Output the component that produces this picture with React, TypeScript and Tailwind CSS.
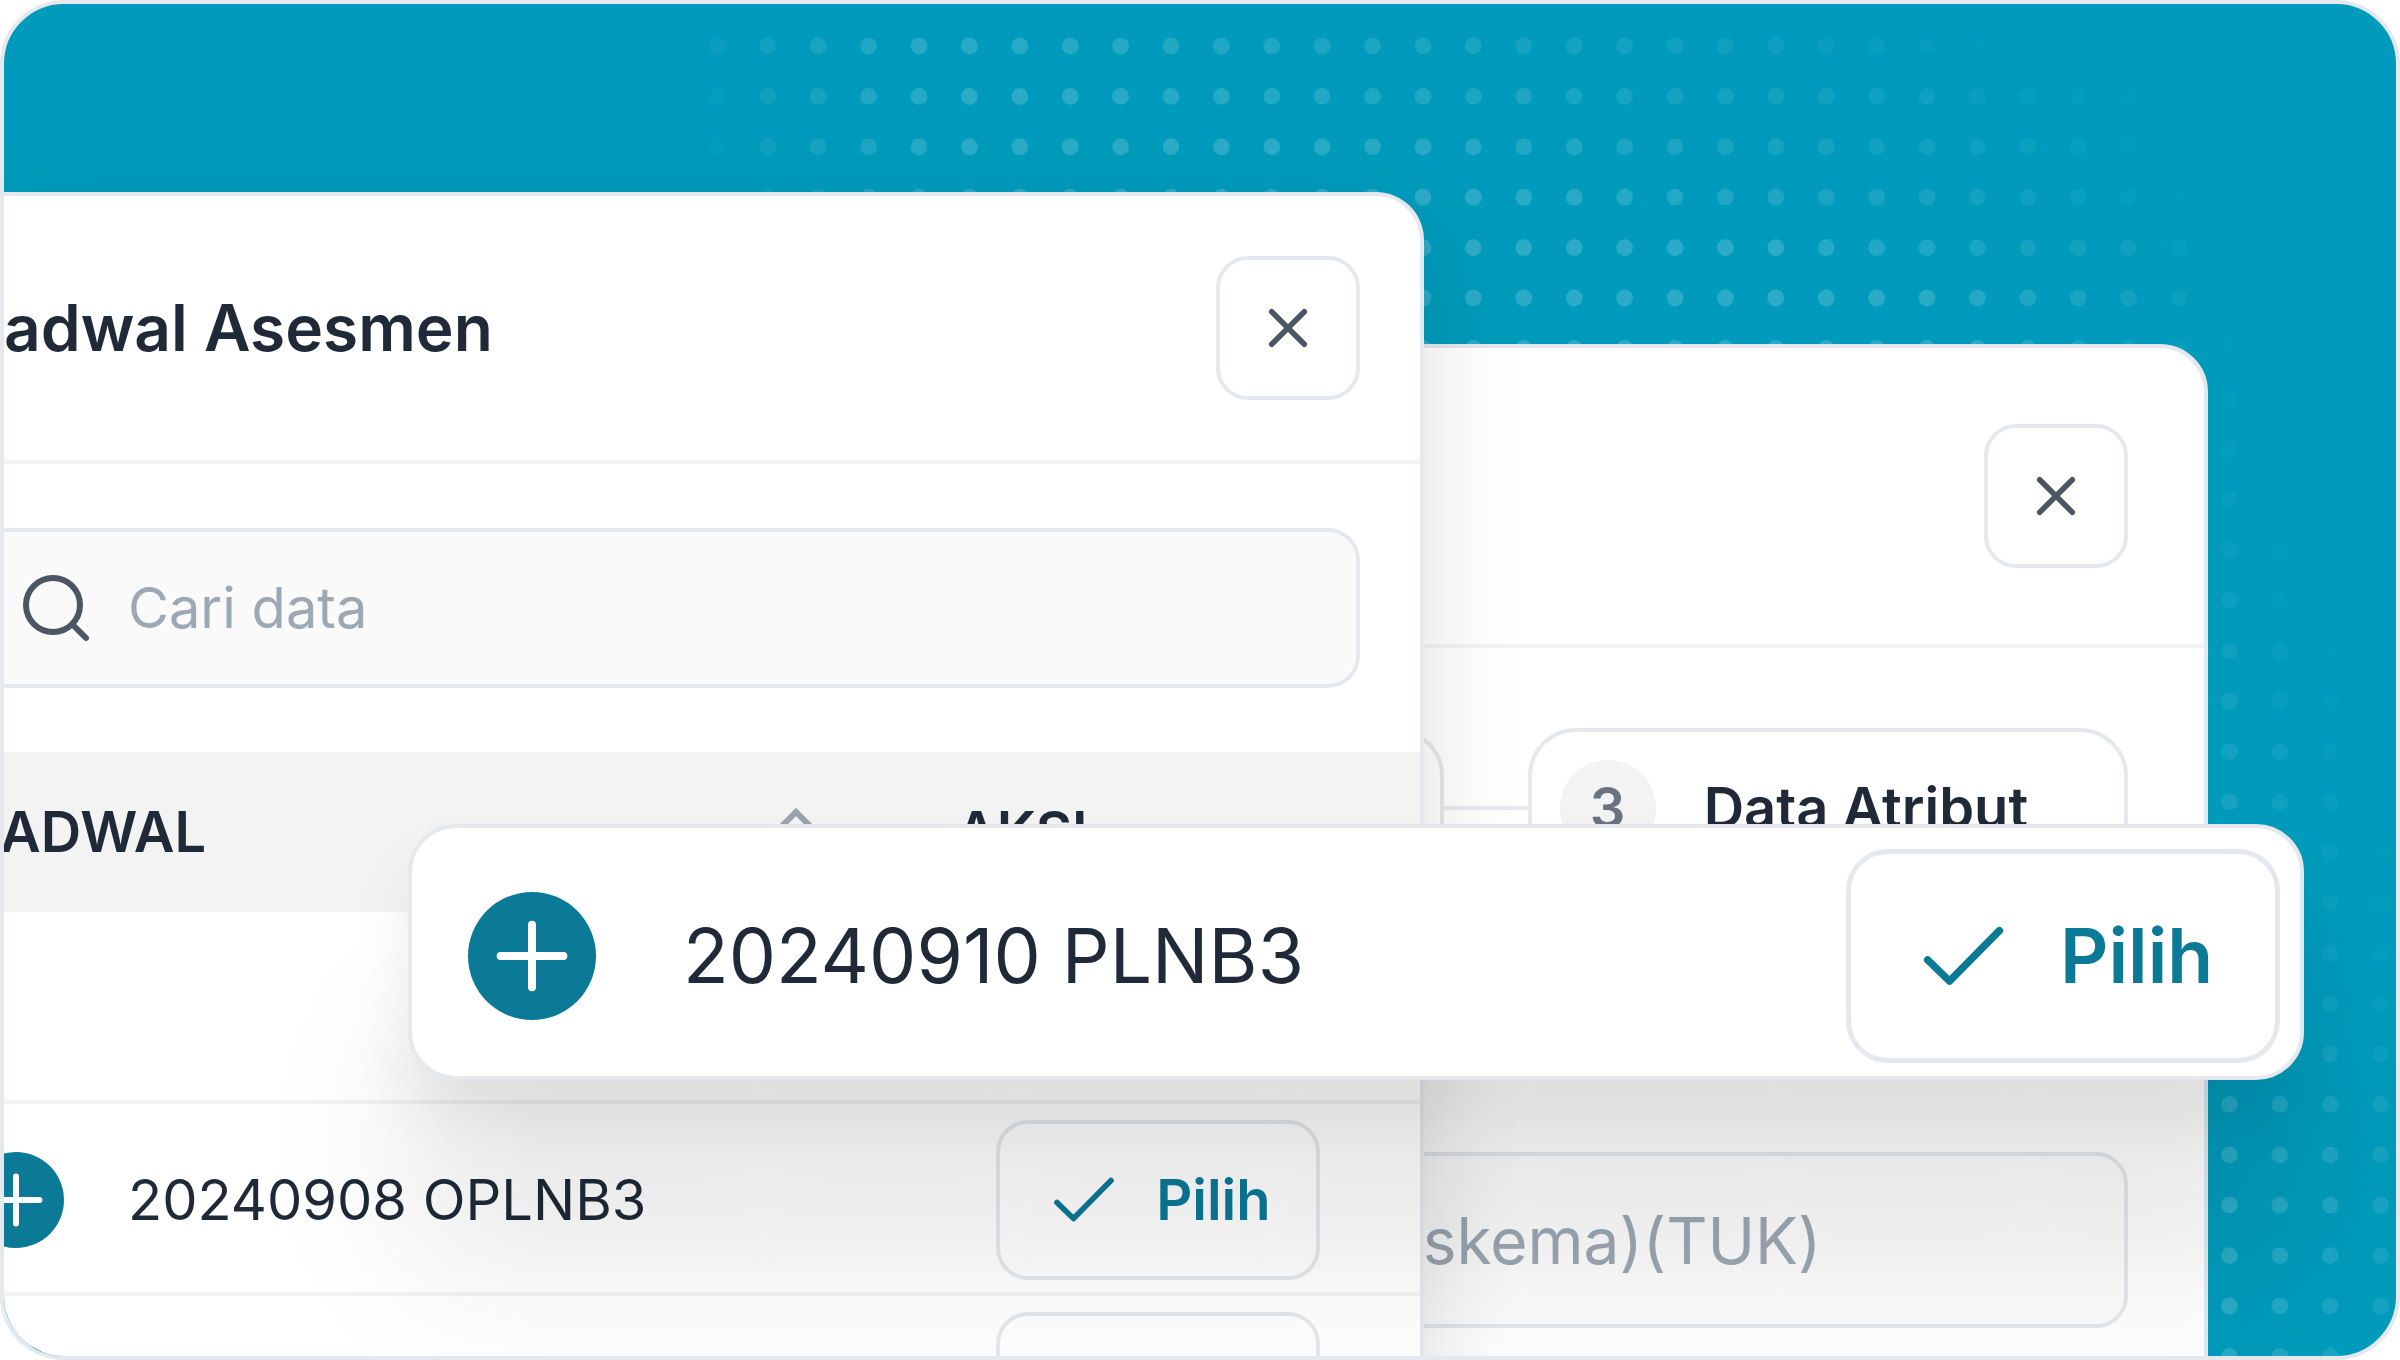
import clsx from 'clsx';

// Fade of the dot pattern: for a given y, dots are solid up to `full` and gone at `none`
const FADE = [
  { y: 46, full: 860, none: 1990 },
  { y: 96, full: 1000, none: 2150 },
  { y: 147, full: 1250, none: 2170 },
  { y: 197, full: 1500, none: 2190 },
  { y: 247, full: 1750, none: 2220 },
  { y: 298, full: 1900, none: 2230 },
  { y: 350, full: 1980, none: 2250 },
  { y: 500, full: 2000, none: 2290 },
  { y: 700, full: 2050, none: 2360 },
  { y: 1000, full: 2150, none: 2430 },
  { y: 1200, full: 2230, none: 2600 },
  { y: 1400, full: 2200, none: 2560 },
];

const STEP = 50.4;

function dotOpacity(x: number, y: number) {
  const last = FADE.length - 1;
  let i = FADE.findIndex((stop) => stop.y >= y);
  if (i === -1) i = last;
  const b = FADE[i];
  const a = FADE[Math.max(i - 1, 0)];
  const t = a === b ? 0 : Math.min((y - a.y) / (b.y - a.y), 1);
  const full = a.full + (b.full - a.full) * t;
  const none = a.none + (b.none - a.none) * t;
  const right = Math.pow(Math.max(0, (none - x) / (none - full)), y < 300 ? 0.75 : 1.1);
  const left = (x - 650 - y * 0.2) / 280;
  return 0.17 * Math.max(0, Math.min(1, left, right));
}

function DotPattern() {
  const dots = [];
  for (let row = 0; row < 27; row++) {
    for (let col = 0; col < 35; col++) {
      const x = 667 + col * STEP;
      const y = 46 + row * STEP;
      const opacity = dotOpacity(x, y);
      if (opacity > 0.005) {
        dots.push(<circle key={`${row}-${col}`} cx={x - 4} cy={y - 4} r="8.4" fill="white" opacity={opacity} />);
      }
    }
  }
  return (
    <svg className="absolute inset-0 w-full h-full" viewBox="0 0 2392 1352" preserveAspectRatio="xMaxYMin slice" aria-hidden="true">
      {dots}
    </svg>
  );
}

function CloseButton() {
  return (
    <button type="button" aria-label="Tutup" className="size-36 shrink-0 flex items-center justify-center rounded-[32px] border-4 border-[#e5e8ec] bg-white text-[#4b5563]">
      <svg className="size-10" viewBox="0 0 40 40" fill="none" stroke="currentColor" strokeWidth="5.6" strokeLinecap="round">
        <path d="M3.7 3.7 36.3 36.3M36.3 3.7 3.7 36.3" />
      </svg>
    </button>
  );
}

function AddButton({ large = false }: { large?: boolean }) {
  return (
    <button
      type="button"
      aria-label="Tambah"
      className={clsx('shrink-0 flex items-center justify-center rounded-full bg-[#0b7a97] text-white', large ? 'size-32' : 'size-24')}
    >
      <svg className="size-full" viewBox="0 0 96 96" fill="none" stroke="currentColor" strokeWidth="6" strokeLinecap="round">
        <path d="M48 24.5v47M24.5 48h47" />
      </svg>
    </button>
  );
}

function SelectButton({ label, large = false }: { label?: string; large?: boolean }) {
  return (
    <button
      type="button"
      aria-label="Pilih"
      className={clsx(
        'shrink-0 flex items-center border-[#e5e8ec] text-[#0b7a97] font-semibold',
        large
          ? 'w-[434px] h-[214px] pl-[70px] gap-[54px] rounded-[42px] border-[5px] text-[75px]'
          : 'w-[324px] h-40 pl-[52px] gap-10 rounded-[32px] border-4 text-[56px]'
      )}
    >
      <svg className={large ? 'size-[85px]' : 'size-16'} viewBox="0 0 64 64" fill="none" stroke="currentColor" strokeWidth="5.6" strokeLinecap="round" strokeLinejoin="round">
        <path d="M5 34.5 21.5 50.5 59 12.5" />
      </svg>
      {label}
    </button>
  );
}

function DetailPanel() {
  return (
    <section className="absolute left-[54%] right-[188px] top-[340px] -bottom-16 rounded-[48px] border-4 border-[#e5e8ec] bg-white">
      <header className="h-[300px] flex items-center justify-end pr-[76px] border-b-4 border-[#f3f3f3]">
        <CloseButton />
      </header>
      <div className="pt-20 pl-5 pr-[76px]">
        <div className="flex items-center">
          <div className="w-[124px] h-40 shrink-0 rounded-[48px] border-4 border-[#e5e8ec]" />
          <div className="w-[84px] h-1 shrink-0 bg-[#e5e8ec]" />
          <div className="flex-1 h-40 flex items-center gap-12 pl-7 rounded-[48px] border-4 border-[#e5e8ec] bg-white text-[56px] font-semibold text-[#1f2937]">
            <span className="size-24 shrink-0 flex items-center justify-center rounded-full bg-[#f3f3f3] text-[#6b7280]">3</span>
            <span className="whitespace-nowrap">Data Atribut</span>
          </div>
        </div>
        <input
          type="text"
          aria-label="Skema dan TUK"
          placeholder="skema)(TUK)"
          className="mt-[264px] w-full h-44 pl-[99px] rounded-[32px] border-4 border-[#e5e8ec] bg-[#fdfdfd] text-[64px] placeholder:text-[#9ca8b4]"
        />
      </div>
    </section>
  );
}

const rows = [
  { name: '', action: '' },
  { name: '20240908 OPLNB3', action: 'Pilih' },
  { name: '', action: '' },
];

function SchedulePanel() {
  return (
    <section className="absolute left-0 w-[59.37%] top-[188px] rounded-tr-[48px] border-t-4 border-r-4 border-[#e5e8ec] bg-white shadow-[0_40px_100px_rgba(0,0,0,0.13)]">
      <header className="h-[268px] flex items-center justify-between pr-[60px] border-b-4 border-[#f3f3f3]">
        <h1 className="text-[64px] font-semibold text-[#1f2937] whitespace-nowrap">adwal Asesmen</h1>
        <CloseButton />
      </header>

      <div className="py-16 pr-[60px]">
        <label className="h-40 flex items-center gap-9 pl-4 rounded-r-[32px] border-y-4 border-r-4 border-[#e5e8ec] bg-[#fafafa]">
          <svg className="size-[72px] shrink-0 text-[#4b5563]" viewBox="0 0 72 72" fill="none" stroke="currentColor" strokeWidth="6" strokeLinecap="round">
            <circle cx="33" cy="33" r="27" />
            <path d="m53 53 13 13" />
          </svg>
          <input type="search" aria-label="Cari data" placeholder="Cari data" className="flex-1 min-w-0 bg-transparent text-[56px] placeholder:text-[#9ca8b4]" />
        </label>
      </div>

      <table className="w-full table-fixed border-separate border-spacing-0 text-left text-[56px] text-[#1f2937]">
        <thead>
          <tr className="bg-[#f3f3f3]">
            <th className="h-40 p-0 font-semibold">
              <div className="-ml-1 flex items-center justify-between pr-[84px]">
                ADWAL
                <svg className="w-10 h-20 text-[#98a3af]" viewBox="0 0 40 80" fill="none" stroke="currentColor" strokeWidth="6">
                  <path d="m5 35 15-15 15 15M5 45l15 15 15-15" />
                </svg>
              </div>
            </th>
            <th className="w-[520px] p-0 pl-14 font-semibold">AKSI</th>
          </tr>
        </thead>
        <tbody>
          {rows.map((row, i) => (
            <tr key={i}>
              <td className="h-48 p-0 pt-1 border-b-4 border-[#f3f3f3]">
                {i > 0 && (
                  <div className="-ml-9 flex items-center gap-16">
                    <AddButton />
                    <span>{row.name}</span>
                  </div>
                )}
              </td>
              <td className="p-0 pt-1 pl-24 border-b-4 border-[#f3f3f3]">{i > 0 && <SelectButton label={row.action} />}</td>
            </tr>
          ))}
        </tbody>
      </table>
    </section>
  );
}

function HighlightedRow() {
  return (
    <div className="absolute left-[404px] right-[92px] top-[820px] h-64 flex items-center pt-2 pl-14 pr-5 rounded-[48px] border-4 border-[#e5e8ec] bg-white shadow-[0_190px_160px_rgba(0,0,0,0.09),0_40px_64px_rgba(0,0,0,0.07)]">
      <AddButton large />
      <span className="ml-[87px] flex-1 whitespace-nowrap text-[75px] text-[#1f2937]">20240910 PLNB3</span>
      <SelectButton label="Pilih" large />
    </div>
  );
}

export default function App() {
  return (
    <div className="bg-white font-[Inter,sans-serif]">
      <main className="relative h-screen overflow-hidden rounded-[64px] border-4 border-[#e5e8ec] bg-[#009bbc]">
        <DotPattern />
        <DetailPanel />
        <SchedulePanel />
        <HighlightedRow />
      </main>
    </div>
  );
}
